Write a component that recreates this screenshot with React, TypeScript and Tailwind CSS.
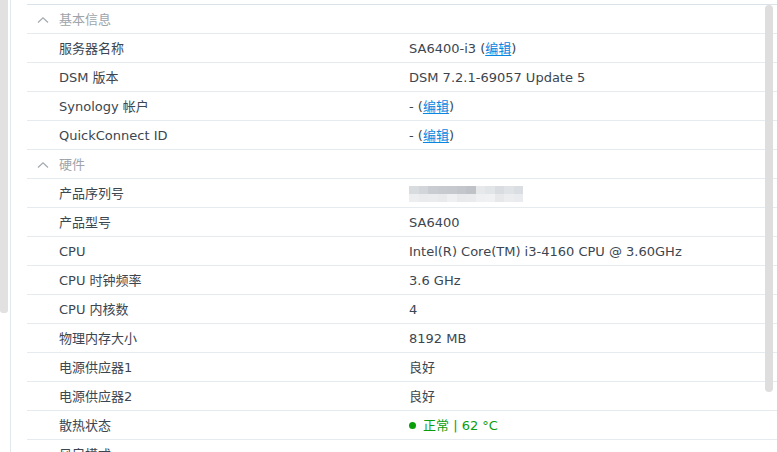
import React from "react";

const font = { fontFamily: '"DejaVu Sans", "Noto Sans CJK SC", sans-serif' };

function Chevron() {
  return (
    <svg width="12" height="8" viewBox="0 0 12 8" className="mr-[10px] ml-[10px]">
      <path d="M1 6.5 L6 1.8 L11 6.5" fill="none" stroke="#a6abb0" strokeWidth="1.3" />
    </svg>
  );
}

function Header({ title }: { title: string }) {
  return (
    <div className="flex h-[29px] items-center border-b border-[#e6ebf0] pt-px">
      <Chevron />
      <span className="text-[13px] text-[#9ea4aa]">{title}</span>
    </div>
  );
}

function Edit() {
  return (
    <>
      (<span className="text-[#0a86e0] underline underline-offset-2">编辑</span>)
    </>
  );
}

function Row({ label, children }: { label: string; children?: React.ReactNode }) {
  return (
    <div className="flex h-[29px] items-center border-b border-[#e6ebf0] pt-px text-[13px] text-[#3c4650]">
      <div className="w-[382px] shrink-0 pl-[32px]">{label}</div>
      <div className="flex items-center">{children}</div>
    </div>
  );
}

const blur = [
  ["#d9dcdf", "#d2d6da", "#c9cdd2", "#c7cbd0", "#c6cacf", "#c3c7cc", "#bfc3c8", "#e6e8ea", "#e2e5e8", "#d9dde1", "#e0e3e6", "#dadde1"],
  ["#eceeef", "#e9ebed", "#eaeced", "#e8eaec", "#eef0f1", "#e8eaec", "#e9ebed", "#eef0f1", "#f0f1f2", "#e6e8ea", "#ebedef", "#e9ebee"],
];

function Blurred() {
  return (
    <div className="flex flex-col blur-[0.6px]">
      {blur.map((r, i) => (
        <div key={i} className="flex">
          {r.map((c, j) => (
            <div key={j} className="h-[8px] w-[9.5px]" style={{ background: c }} />
          ))}
        </div>
      ))}
    </div>
  );
}

export default function App() {
  return (
    <div className="relative flex h-[452px] w-[777px] overflow-hidden bg-white" style={font}>
      <div className="flex w-[8px] shrink-0 flex-col">
        <div className="h-[313px] rounded-b-[3px] bg-[#e1e1e1]" />
      </div>
      <div className="ml-[2px] w-px shrink-0 bg-[#e1e8ee]" />
      <div className="ml-[16px] flex flex-1 flex-col pt-[4px]">
        <div className="border-t border-[#dbe3ea]">
          <Header title="基本信息" />
          <Row label="服务器名称">
            SA6400-i3&nbsp;<Edit />
          </Row>
          <Row label="DSM 版本">DSM 7.2.1-69057 Update 5</Row>
          <Row label="Synology 帐户">
            -&nbsp;<Edit />
          </Row>
          <Row label="QuickConnect ID">
            -&nbsp;<Edit />
          </Row>
          <Header title="硬件" />
          <Row label="产品序列号">
            <Blurred />
          </Row>
          <Row label="产品型号">SA6400</Row>
          <Row label="CPU">Intel(R) Core(TM) i3-4160 CPU @ 3.60GHz</Row>
          <Row label="CPU 时钟频率">3.6 GHz</Row>
          <Row label="CPU 内核数">4</Row>
          <Row label="物理内存大小">8192 MB</Row>
          <Row label="电源供应器1">良好</Row>
          <Row label="电源供应器2">良好</Row>
          <Row label="散热状态">
            <span className="mr-[7px] inline-block h-[7px] w-[7px] rounded-full bg-[#0b9e0b]" />
            <span className="text-[#0b9e0b]">正常 | 62 °C</span>
          </Row>
          <Row label="风扇模式" />
        </div>
      </div>
      <div className="absolute left-[765px] top-[5px] h-[387px] w-[8px] rounded-[4px] bg-[#dedede]" />
    </div>
  );
}
